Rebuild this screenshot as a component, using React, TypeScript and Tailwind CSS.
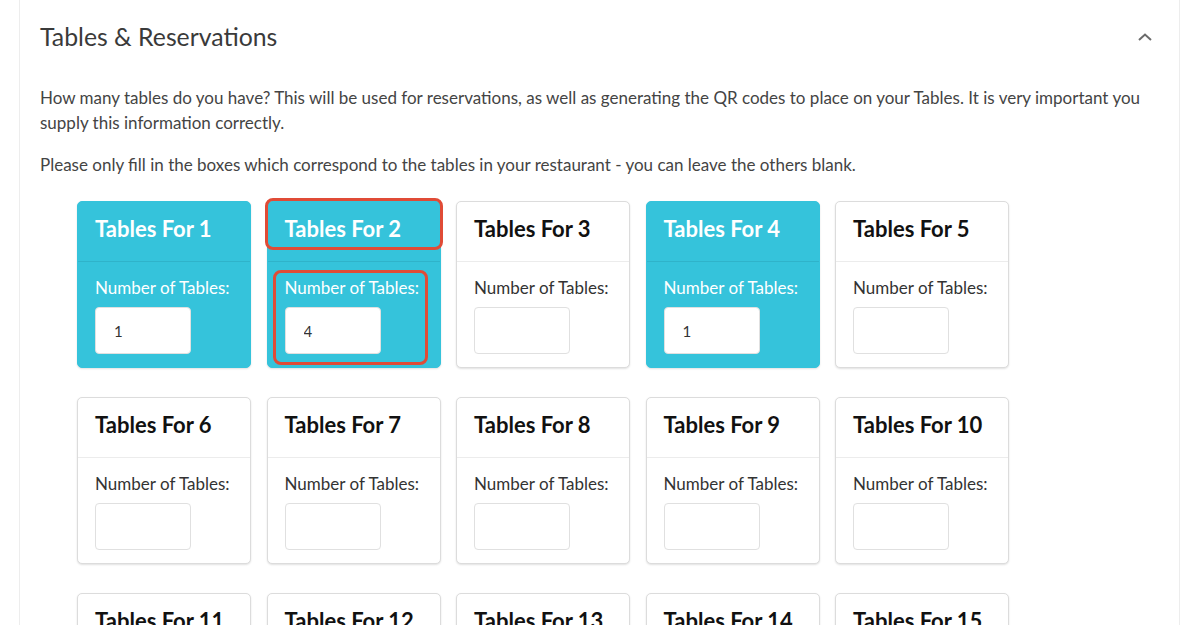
import React from "react";

type Row = { n: number; value?: string; active?: boolean };

const rows: Row[] = [
  { n: 1, value: "1", active: true },
  { n: 2, value: "4", active: true },
  { n: 3 },
  { n: 4, value: "1", active: true },
  { n: 5 },
  { n: 6 },
  { n: 7 },
  { n: 8 },
  { n: 9 },
  { n: 10 },
  { n: 11 },
  { n: 12 },
  { n: 13 },
  { n: 14 },
  { n: 15 },
];

const TableCard = ({ row }: { row: Row }) => {
  const active = row.active;
  return (
    <div
      className={`relative w-[174px] rounded-[5px] border shadow-[0_1px_2px_rgba(0,0,0,0.12)] ${
        active ? "bg-[#35c3db] border-[#35c3db]" : "bg-white border-[#dcdcdc]"
      }`}
    >
      <div
        className={`h-[60px] px-[17px] pt-[13px] border-b ${
          active ? "border-[#2fb3ca]" : "border-[#ececec]"
        }`}
      >
        <h3 className={`text-[22px] leading-[28px] font-bold ${active ? "text-white" : "text-[#111]"}`}>
          Tables For {row.n}
        </h3>
      </div>
      <div className="px-[17px] pt-[15px] pb-[13px]">
        <div className={`text-[17px] leading-[22px] ${active ? "text-white" : "text-[#333]"}`}>
          Number of Tables:
        </div>
        <input
          defaultValue={row.value ?? ""}
          className="mt-[8px] block w-[96px] h-[47px] rounded-[4px] border border-[#e0e0e0] bg-white pl-[18px] text-[15px] text-[#333] outline-none"
        />
      </div>
      {row.n === 2 && (
        <>
          <div className="absolute left-[-3px] top-[-4px] w-[178px] h-[52px] rounded-[8px] border-[3px] border-[#e04b36]" />
          <div className="absolute left-[5px] top-[68px] w-[155px] h-[95px] rounded-[8px] border-[3px] border-[#e04b36]" />
        </>
      )}
    </div>
  );
};

export default function App() {
  return (
    <div className="min-h-screen bg-white font-['Lato','Open_Sans',sans-serif] overflow-hidden">
      <div className="ml-[19px] w-[1161px] border-x border-[#ededed] pl-[20px] pr-[30px] pt-[21px] pb-10">
        <div className="flex items-center justify-between">
          <h2 className="text-[24.8px] leading-[32px] text-[#3a3a3a]">Tables &amp; Reservations</h2>
          <svg width="16" height="10" viewBox="0 0 16 10" className="mr-[-4px]" fill="none">
            <path d="M2 8 L8 2.5 L14 8" stroke="#6b6b6b" strokeWidth="2" />
          </svg>
        </div>
        <p className="mt-[32px] text-[17px] leading-[25px] text-[#444]">
          How many tables do you have? This will be used for reservations, as well as generating the QR codes to place on your Tables. It is very important you supply this information correctly.
        </p>
        <p className="mt-[17px] text-[17px] leading-[25px] text-[#444]">
          Please only fill in the boxes which correspond to the tables in your restaurant - you can leave the others blank.
        </p>
        <div className="mt-[24px] ml-[37px] grid grid-cols-[repeat(5,174px)] gap-x-[15.5px] gap-y-[29px]">
          {rows.map((r) => (
            <TableCard key={r.n} row={r} />
          ))}
        </div>
      </div>
    </div>
  );
}
